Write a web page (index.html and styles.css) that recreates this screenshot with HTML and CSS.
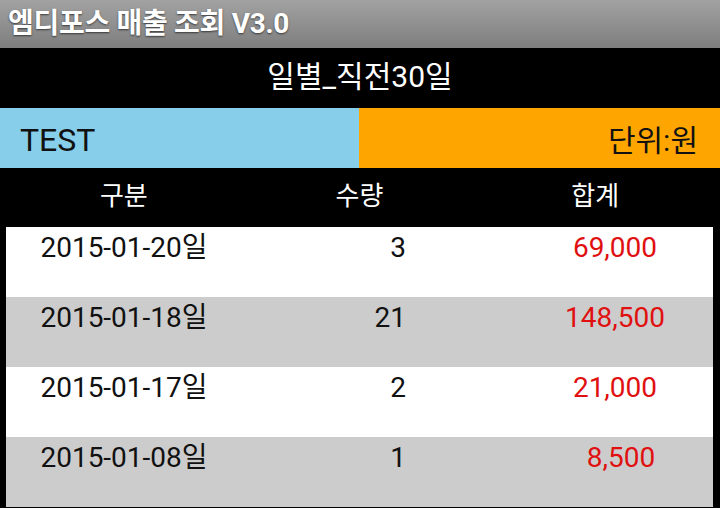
FILE: index.html
```html
<!DOCTYPE html>
<html lang="ko">
<head>
<meta charset="utf-8">
<title>엠디포스 매출 조회 V3.0</title>
<link rel="stylesheet" href="styles.css">
</head>
<body>
<div class="app">
  <header class="titlebar">엠디포스 매출 조회 V3.0</header>
  <div class="period">일별_직전30일</div>
  <div class="info">
    <div class="store">TEST</div>
    <div class="unit">단위:원</div>
  </div>
  <div class="table">
    <div class="thead">
      <div class="th">구분</div>
      <div class="th">수량</div>
      <div class="th">합계</div>
    </div>
    <div class="row">
      <div class="date">2015-01-20일</div>
      <div class="qty">3</div>
      <div class="amt">69,000</div>
    </div>
    <div class="row alt">
      <div class="date">2015-01-18일</div>
      <div class="qty">21</div>
      <div class="amt">148,500</div>
    </div>
    <div class="row">
      <div class="date">2015-01-17일</div>
      <div class="qty">2</div>
      <div class="amt">21,000</div>
    </div>
    <div class="row alt">
      <div class="date">2015-01-08일</div>
      <div class="qty">1</div>
      <div class="amt amt-short">8,500</div>
    </div>
  </div>
</div>
</body>
</html>
```
FILE: styles.css
```css
html, body {
  margin: 0;
  padding: 0;
  background: #000;
}
body {
  font-family: Roboto, "Noto Sans CJK KR", sans-serif;
  width: 720px;
  height: 508px;
  overflow: hidden;
}
.app {
  display: flex;
  flex-direction: column;
  width: 720px;
  height: 508px;
  background: #000;
}
.titlebar {
  height: 48px;
  box-sizing: border-box;
  padding: 0 0 0 8px;
  display: flex;
  align-items: center;
  background: linear-gradient(#a2a2a2, #7e7e7e);
  color: #fff;
  font-weight: bold;
  font-size: 28px;
  line-height: 48px;
  text-shadow: 0 1px 2px rgba(0,0,0,0.6);
  letter-spacing: -0.3px;
}
.period {
  height: 60px;
  display: flex;
  align-items: center;
  justify-content: center;
  color: #fff;
  font-size: 30px;
  line-height: 34px;
  padding-bottom: 2px;
  box-sizing: border-box;
}
.info {
  height: 60px;
  display: flex;
}
.store {
  flex: 1;
  background: #87ceeb;
  color: #111;
  font-size: 32px;
  line-height: 36px;
  padding: 14px 0 0 20px;
}
.unit {
  flex: 1;
  background: #ffa500;
  color: #111;
  font-size: 30px;
  line-height: 36px;
  padding: 15px 22px 0 0;
  text-align: right;
}
.table {
  padding: 0 7px 1px 6px;
  display: flex;
  flex-direction: column;
}
.thead {
  height: 59px;
  display: grid;
  grid-template-columns: 1fr 1fr 1fr;
  color: #fff;
  font-size: 26px;
  line-height: 32px;
}
.th {
  text-align: center;
  padding-top: 12px;
}
.row {
  height: 70px;
  box-sizing: border-box;
  padding-top: 4px;
  display: grid;
  grid-template-columns: 236px 164px 1fr;
  background: #fff;
  font-size: 28px;
  line-height: 34px;
  color: #111;
}
.row.alt {
  background: #cccccc;
}
.date {
  text-align: center;
}
.qty {
  text-align: right;
}
.amt {
  text-align: center;
  padding-left: 111px;
  color: #e01010;
}
.amt-short {
  padding-left: 123px;
}
```
